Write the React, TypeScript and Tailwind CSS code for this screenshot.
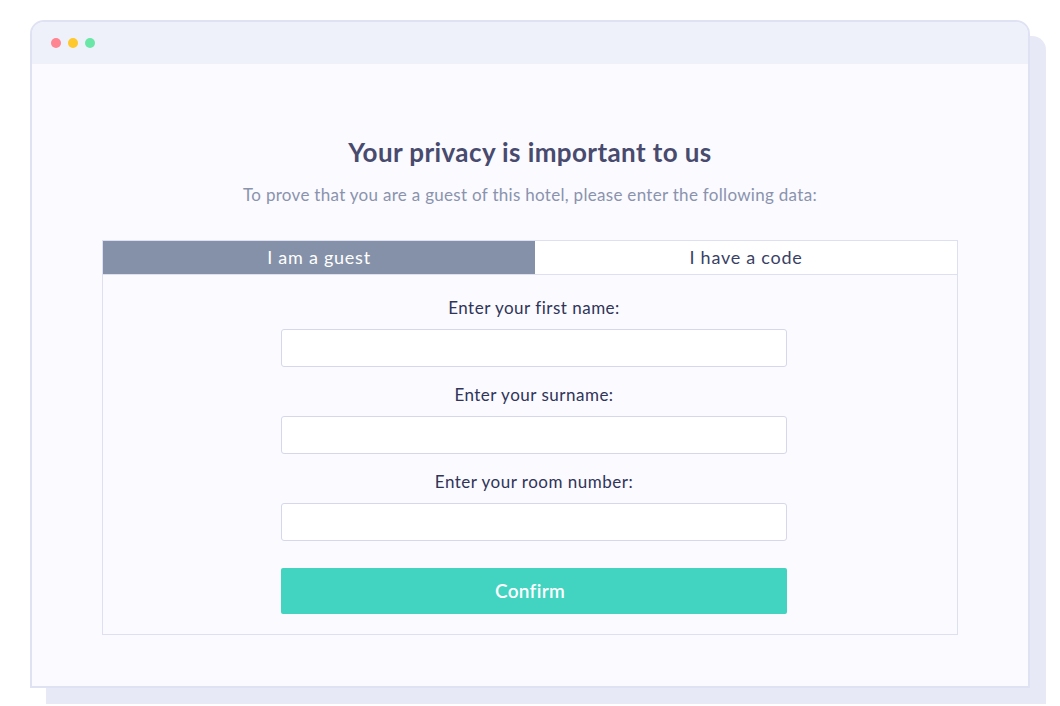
import React, { useState } from 'react';

const fields = [
  { id: 'first', label: 'Enter your first name:' },
  { id: 'surname', label: 'Enter your surname:' },
  { id: 'room', label: 'Enter your room number:' },
];

export default function App() {
  const [tab, setTab] = useState<'guest' | 'code'>('guest');
  const [values, setValues] = useState<Record<string, string>>({});

  return (
    <div className="min-h-[706px] w-[1060px] bg-white pl-[30px] pt-[20px]" style={{ fontFamily: 'Lato, "Open Sans", sans-serif' }}>
      <div className="flex h-[668px] w-[1000px] flex-col overflow-hidden rounded-t-[14px] border-2 border-[#dfe2f3] bg-[#fafaff] shadow-[16px_16px_0_0_#e7eaf6]">
        <div className="flex h-[42px] shrink-0 items-center gap-[7px] bg-[#eef1fa] pl-[19px]">
          <span className="h-[10px] w-[10px] rounded-full bg-[#ff8591]" />
          <span className="h-[10px] w-[10px] rounded-full bg-[#ffc82c]" />
          <span className="h-[10px] w-[10px] rounded-full bg-[#6ae6a6]" />
        </div>

        <div className="flex flex-col items-center px-[70px] pt-[72px]">
          <h1 className="text-[26px] font-bold leading-[32px] tracking-[0.4px] text-[#484a6e]">Your privacy is important to us</h1>
          <p className="mt-[15px] text-[17px] leading-[24px] tracking-[0.3px] text-[#8a93ad]">
            To prove that you are a guest of this hotel, please enter the following data:
          </p>

          <div className="mt-[33px] w-full">
            <div className="flex h-[35px] border border-[#dde0f0] bg-white">
              <button
                onClick={() => setTab('guest')}
                className={`w-[432px] text-[18px] tracking-[0.75px] ${tab === 'guest' ? 'bg-[#8591a8] text-white' : 'bg-white text-[#3a3f66]'}`}
              >
                I am a guest
              </button>
              <button
                onClick={() => setTab('code')}
                className={`flex-1 text-[18px] tracking-[0.75px] ${tab === 'code' ? 'bg-[#8591a8] text-white' : 'bg-white text-[#3a3f66]'}`}
              >
                I have a code
              </button>
            </div>

            <div className="flex flex-col items-center border border-t-0 border-[#dde0f0] pb-[20px] pl-[8px] pt-[22px]">
              {fields.map((f) => (
                <div key={f.id} className="mb-[17px] flex w-[506px] flex-col items-center">
                  <label htmlFor={f.id} className="text-[17px] leading-[22px] tracking-[0.5px] text-[#2f3458]">
                    {f.label}
                  </label>
                  <input
                    id={f.id}
                    value={values[f.id] || ''}
                    onChange={(e) => setValues({ ...values, [f.id]: e.target.value })}
                    className="mt-[10px] h-[38px] w-full rounded-[3px] border border-[#d4d8ea] bg-white px-3 text-[16px] outline-none"
                  />
                </div>
              ))}
              <button className="mt-[10px] h-[46px] w-[506px] rounded-[2px] bg-[#42d4c0] pr-[8px] text-[19px] font-semibold tracking-[0.3px] text-white">
                Confirm
              </button>
            </div>
          </div>
        </div>
      </div>
    </div>
  );
}
